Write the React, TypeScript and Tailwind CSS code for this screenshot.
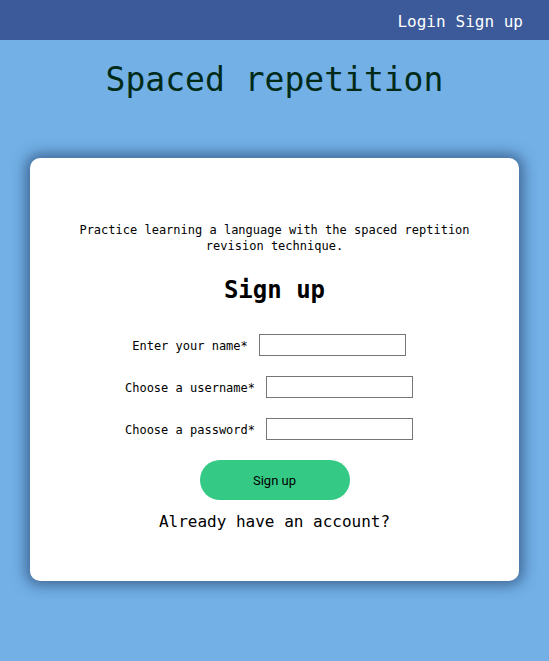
const mono = { fontFamily: '"DejaVu Sans Mono", "Liberation Mono", monospace' }

const Field = ({ label, type = 'text' }: { label: string; type?: string }) => (
  <div className="flex items-center justify-center gap-[11px] pr-[11px]">
    <label className="text-[12px] leading-4 pt-[2px] text-black">{label}</label>
    <input
      type={type}
      className="w-[147px] h-[22px] border border-[#767676] bg-white outline-none"
    />
  </div>
)

const App = () => {
  return (
    <div className="min-h-[661px] bg-[#72b0e6]" style={mono}>
      {/* Top bar */}
      <div className="h-10 bg-[#3c5a9a] flex items-center justify-end pr-[26px] pt-[3px]">
        <a className="text-white text-base leading-5 mr-[10px]">Login</a>
        <a className="text-white text-base leading-5">Sign up</a>
      </div>

      <h1 className="mt-[20px] text-center text-[33px] leading-10 text-[#002a18]">
        Spaced repetition
      </h1>

      <div className="mx-[30px] mt-[58px] bg-white rounded-[10px] shadow-[0_0_14px_4px_rgba(20,40,80,0.55)] pt-[64px] pb-[49px] px-10 flex flex-col items-center">
        <p className="text-[12px] leading-4 text-center text-black">
          Practice learning a language with the spaced reptition revision technique.
        </p>
        <h2 className="mt-5 text-[24px] leading-8 font-bold text-black">Sign up</h2>

        <div className="mt-[28px] flex flex-col gap-5 w-full">
          <Field label="Enter your name*" />
          <Field label="Choose a username*" />
          <Field label="Choose a password*" type="password" />
        </div>

        <button
          className="mt-5 w-[150px] h-10 pt-[2px] rounded-full bg-[#34c984] text-[13px] text-black"
          style={{ fontFamily: 'Roboto, "Liberation Sans", sans-serif' }}
        >
          Sign up
        </button>
        <div className="mt-[12px] text-base leading-5 text-black">Already have an account?</div>
      </div>
    </div>
  )
}

export default App
